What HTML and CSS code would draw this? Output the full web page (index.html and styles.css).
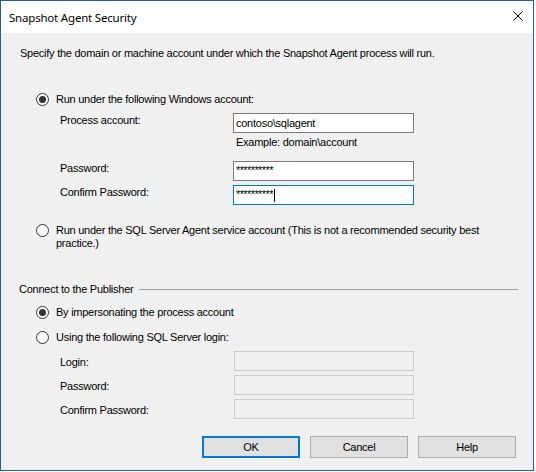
FILE: index.html
```html
<!DOCTYPE html>
<html lang="en">
<head>
<meta charset="utf-8">
<title>Snapshot Agent Security</title>
<link rel="stylesheet" href="styles.css">
</head>
<body>
<div class="window">
  <div class="titlebar">
    <span class="title">Snapshot Agent Security</span>
    <svg class="close" width="10" height="10" viewBox="0 0 10 10"><path d="M0.5 0.5L9.5 9.5M9.5 0.5L0.5 9.5" stroke="#000" stroke-width="1" fill="none"/></svg>
  </div>
  <div class="content">
    <p class="intro">Specify the domain or machine account under which the Snapshot Agent process will run.</p>

    <div class="radio-row r1"><span class="radio checked"></span><span class="radio-text">Run under the following Windows account:</span></div>

    <div class="field-row f-process"><span class="field-label">Process account:</span><span class="input">contoso\sqlagent</span></div>
    <div class="example">Example: domain\account</div>
    <div class="field-row f-pass"><span class="field-label">Password:</span><span class="input"><span class="stars">**********</span></span></div>
    <div class="field-row f-confirm"><span class="field-label">Confirm Password:</span><span class="input focused"><span class="stars">**********</span><span class="caret"></span></span></div>

    <div class="radio-row r2"><span class="radio"></span><span class="radio-text wrap">Run under the SQL Server Agent service account (This is not a recommended security best practice.)</span></div>

    <div class="group"><span class="group-title">Connect to the Publisher</span><span class="rule"></span></div>

    <div class="radio-row r3"><span class="radio checked"></span><span class="radio-text">By impersonating the process account</span></div>
    <div class="radio-row r4"><span class="radio"></span><span class="radio-text">Using the following SQL Server login:</span></div>

    <div class="field-row lower f-login"><span class="field-label">Login:</span><span class="input disabled"></span></div>
    <div class="field-row lower f-pass2"><span class="field-label">Password:</span><span class="input disabled"></span></div>
    <div class="field-row lower f-confirm2"><span class="field-label">Confirm Password:</span><span class="input disabled"></span></div>

    <div class="buttons">
      <button class="btn default">OK</button>
      <button class="btn">Cancel</button>
      <button class="btn">Help</button>
    </div>
  </div>
</div>
</body>
</html>
```
FILE: styles.css
```css
html, body {
  margin: 0;
  padding: 0;
  background: #ffffff;
}
body {
  font-family: "Liberation Sans", Arial, sans-serif;
  font-size: 11px;
  letter-spacing: -0.25px;
  color: #000;
}
.window {
  width: 534px;
  height: 471px;
  box-sizing: border-box;
  border: 1px solid #1f5fae;
  background: #f0f0f0;
  display: flex;
  flex-direction: column;
}
.titlebar {
  height: 32px;
  flex: none;
  background: #ffffff;
  display: flex;
  align-items: center;
  justify-content: space-between;
  padding: 0 10px 0 8px;
}
.title {
  font-family: "Noto Sans", "Open Sans", sans-serif;
  font-size: 11.5px;
  letter-spacing: -0.2px;
}
.close {
  display: block;
  margin-top: -2px;
}
.content {
  flex: 1;
  display: flex;
  flex-direction: column;
  line-height: 13px;
}
.intro {
  margin: 14px 0 0 19px;
  height: 13px;
}
.radio-row {
  display: flex;
  align-items: flex-start;
  gap: 7px;
  margin-left: 35px;
}
.radio {
  width: 13px;
  height: 13px;
  box-sizing: border-box;
  border: 1px solid #333333;
  border-radius: 50%;
  background: #ffffff;
  display: flex;
  align-items: center;
  justify-content: center;
  flex: none;
}
.radio.checked::after {
  content: "";
  width: 7px;
  height: 7px;
  border-radius: 50%;
  background: #333333;
}
.radio-text.wrap {
  width: 450px;
}
.r1 { margin-top: 33px; }
.r2 { margin-top: 19px; }
.r3 { margin-top: 10px; }
.r4 { margin-top: 12px; }

.field-row {
  display: flex;
  align-items: flex-start;
  margin-left: 59px;
  height: 20px;
}
.field-label {
  width: 173px;
  padding-top: 1px;
  flex: none;
}
.input {
  width: 181px;
  height: 20px;
  box-sizing: border-box;
  border: 1px solid #7a7a7a;
  background: #ffffff;
  padding: 0 2px;
  line-height: 18px;
  display: flex;
  align-items: center;
  white-space: nowrap;
}
.input.focused {
  border-color: #0078d7;
}
.stars {
  letter-spacing: -0.6px;
  margin-top: -3px;
}
.caret {
  display: inline-block;
  width: 1px;
  height: 13px;
  background: #000;
  margin-left: 1px;
}
.f-process { margin-top: 7px; }
.example {
  margin: 3px 0 0 235px;
  height: 13px;
}
.f-pass { margin-top: 12px; }
.f-confirm { margin-top: 4px; }

.group {
  display: flex;
  align-items: center;
  margin: 33px 15px 0 18px;
  height: 13px;
}
.rule {
  flex: 1;
  height: 1px;
  background: #a0a0a0;
  margin-left: 6px;
}

.field-row.lower .field-label {
  width: 174px;
  padding-top: 5px;
}
.input.disabled {
  width: 180px;
  border-color: #cccccc;
  background: #f0f0f0;
}
.f-login { margin-top: 7px; }
.f-pass2 { margin-top: 4px; }
.f-confirm2 { margin-top: 4px; }

.buttons {
  display: flex;
  justify-content: flex-end;
  gap: 10px;
  padding-right: 17px;
  margin-top: 17px;
}
.btn {
  width: 98px;
  height: 22px;
  box-sizing: border-box;
  border: 1px solid #adadad;
  background: #e1e1e1;
  font-family: "Liberation Sans", Arial, sans-serif;
  font-size: 11px;
  letter-spacing: -0.25px;
  color: #000;
  padding: 0;
  margin: 0;
  display: flex;
  align-items: center;
  justify-content: center;
}
.btn.default {
  border: 2px solid #0078d7;
}
```
